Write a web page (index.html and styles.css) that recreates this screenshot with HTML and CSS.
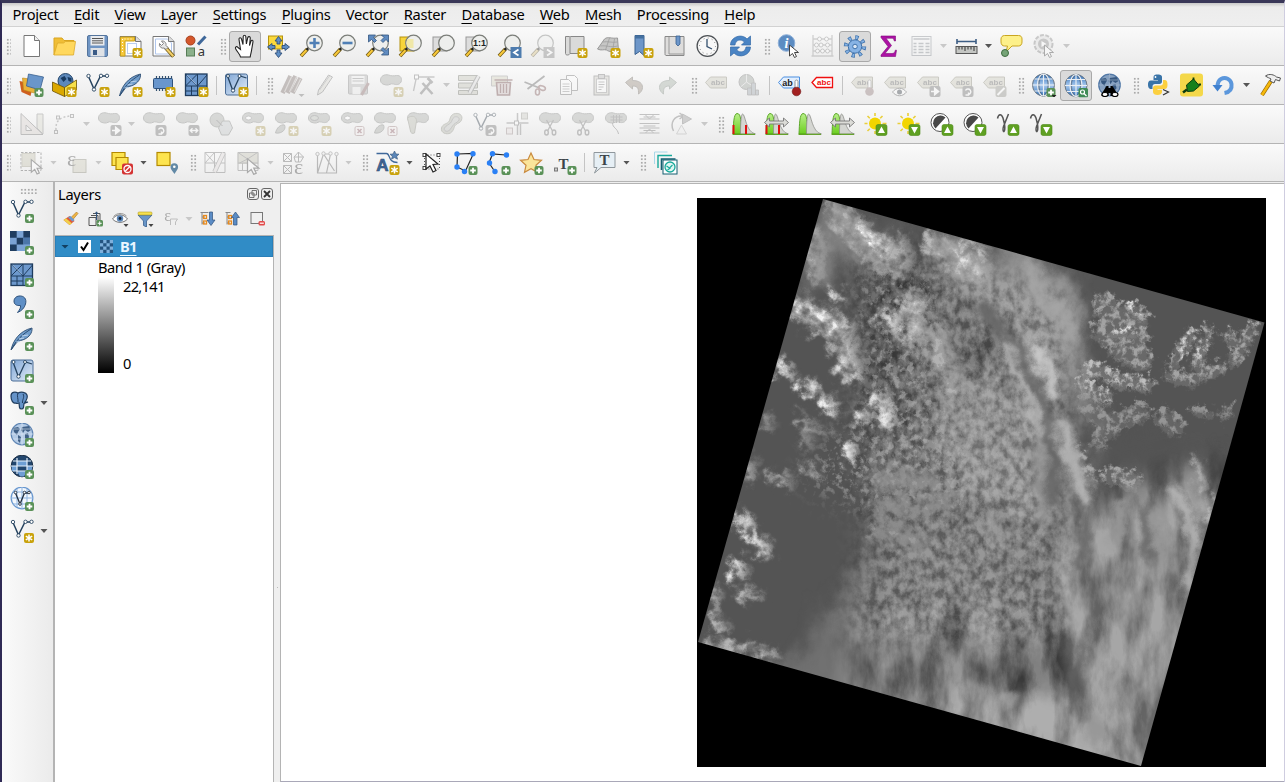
FILE: index.html
```html
<!DOCTYPE html>
<html lang="en">
<head>
<meta charset="utf-8">
<title>QGIS</title>
<link rel="stylesheet" href="styles.css">
</head>
<body>
<svg class="paints" aria-hidden="true"><defs>
<linearGradient id="gBlue" x1="0" y1="0" x2="1" y2="1"><stop offset="0" stop-color="#7fa6d6"/><stop offset="1" stop-color="#e4edf7"/></linearGradient>
<linearGradient id="gGlobe" x1="0" y1="0" x2="0" y2="1"><stop offset="0" stop-color="#2f6fb8"/><stop offset=".5" stop-color="#a8c9ee"/><stop offset="1" stop-color="#2f6fb8"/></linearGradient>
<linearGradient id="gGreen" x1="0" y1="0" x2="0" y2="1"><stop offset="0" stop-color="#b9f08a"/><stop offset="1" stop-color="#6cce1f"/></linearGradient>
</defs></svg>
<svg class="symbols" aria-hidden="true">
<defs>
<g id="bStar"><rect x="14" y="14" width="10" height="10" rx="2" fill="#c9a20c"/><path d="M19 15.500v7M15.800 17.200l6.400 3.600M15.800 20.800l6.400-3.600" stroke="#fff" stroke-width="1.500"/></g>
<g id="bPlus"><rect x="15" y="15" width="9" height="9" rx="2" fill="#5a9158"/><path d="M19.500 16.700v5.600M16.700 19.500h5.600" stroke="#fff" stroke-width="1.800"/></g>
<g id="bX"><rect x="14.500" y="14.500" width="9" height="9" rx="1.500" fill="#fbeeee" stroke="#b98080"/><path d="M17 17l4 4M21 17l-4 4" stroke="#b56" stroke-width="1.500"/></g>
<g id="bArrow"><rect x="13" y="13" width="11" height="11" rx="2" fill="#777"/><path d="M14.500 18.500h4M18.200 15.500l3.800 3-3.800 3z" stroke="#fff" stroke-width="1.600" fill="#fff"/></g>
<g id="bTurn"><rect x="13" y="13" width="11" height="11" rx="2" fill="#777"/><path d="M16 17.500a2.800 2.800 0 1 1 3 4M19 19.500v2.500h-3" stroke="#fff" stroke-width="1.400" fill="none"/></g>
<g id="bMove"><rect x="13" y="13" width="11" height="11" rx="2" fill="#777"/><path d="M15 18.500h7M17 16.300l-2.300 2.200 2.300 2.200M20 16.300l2.300 2.200-2.300 2.200" stroke="#fff" stroke-width="1.300" fill="none"/></g>
<g id="bUp"><rect x="12.500" y="12.500" width="11" height="11" rx="2" fill="#5fa022" stroke="#4d8a17" stroke-width=".6"/><path d="M18 14.500l3.500 6.500h-7z" fill="#fff"/></g>
<g id="bDown"><rect x="12.500" y="12.500" width="11" height="11" rx="2" fill="#5fa022" stroke="#4d8a17" stroke-width=".6"/><path d="M18 21.500l3.500-6.500h-7z" fill="#fff"/></g>
<g id="lens"><path d="M1.500 22L8 15" stroke="#6b5410" stroke-width="3.600"/><path d="M1.800 21.700L8 15" stroke="#f7c83a" stroke-width="2.200"/><path d="M7 16l3-3" stroke="#222" stroke-width="2.400"/><circle cx="15" cy="9" r="7.800" fill="#eeefed" stroke="#7b7e79" stroke-width="1.200"/></g>
<g id="cur"><path d="M12 11v11l3-2.500 2 4 2-1-2-4h4z" fill="#fff" stroke="#444" stroke-width="1"/></g>
<g id="vline"><path d="M3 3.500L8.500 16 15 3h6.500" fill="none" stroke="#26435f" stroke-width="1.500"/><g fill="#fff" stroke="#26435f" stroke-width=".9"><circle cx="3" cy="3" r="1.700"/><circle cx="8.500" cy="16.500" r="1.700"/><circle cx="15.500" cy="2.800" r="1.700"/><circle cx="21.500" cy="2.800" r="1.700"/></g></g>
<g id="feath"><path d="M1 23C3 14 9 4 22 1c.5 5-3 9-7 11-3 1.500-6 1.500-8 3z" fill="#6f9ccb" stroke="#2c4d72" stroke-width=".9"/><path d="M1.500 22.500C6 13 13 7 21 2" stroke="#2c4d72" fill="none"/><path d="M9 12l5-1M12 9l6-1M6 15l4-.5" stroke="#b8d0ea" stroke-width="1.200"/></g>
<g id="grid4"><rect x="1" y="1" width="21.500" height="21.500" fill="#6d98cc" stroke="#1f3c5e" stroke-width="1.300"/><path d="M1 13h21.500M13 1v21.500M1 1l12 12M13 1L1 13M13 13L22.500 2M1 18h12M7 13v9.500" stroke="#1f3c5e" stroke-width="1" fill="none"/><path d="M2.500 2l9.500 9.500" stroke="#a9c6e6" stroke-width=".8"/></g>
<g id="vbox"><rect x="1" y="1" width="22" height="21" rx="2" fill="url(#gBlue)" stroke="#4b6d96"/><path d="M3 3l5.500 15L15.500 3 22 5" fill="none" stroke="#26435f" stroke-width="1.300"/><g fill="#fff" stroke="#26435f" stroke-width=".9"><circle cx="3.500" cy="3" r="1.500"/><circle cx="8.500" cy="17.500" r="1.700"/><circle cx="15" cy="3" r="1.500"/></g></g>
<g id="bean"><path d="M1 6c0-4 4-6 8-5 3 1 5 1 8 .5 4-.5 6 3 4.500 6.500-1.500 3-5 3-7.500 2-3-1-4 1.500-7 1C3 10.500 1 9 1 6z" fill="#a9aea6" stroke="#7f837c"/></g>
<g id="tag"><path d="M1 9.500L6 4H22V15H6z" fill="#d0ccaa" stroke="#8f8c6a"/><text x="13.500" y="12.300" class="abc">abc</text></g>
<g id="sun"><circle cx="11.500" cy="11.500" r="6" fill="#f2d500"/><path d="M11.500 1v3M11.500 19v3M1 11.500h3M19 11.500h4M4 4l2.300 2.300M16.700 6.300L19 4M4 19l2.300-2.300" stroke="#e9cf3a" stroke-width="1.600"/></g>
<g id="half"><circle cx="10.500" cy="10.500" r="9" fill="#fff" stroke="#555"/><path d="M16 5.500A7.200 7.200 0 1 0 6 16.500z" fill="#484848"/></g>
<g id="hist"><path d="M1.500 22C2 12 2 2 5.500 1.500c5 0 3 9 5 20.500z" fill="url(#gGreen)" stroke="#5da82a"/><path d="M9 22c0-14 1-20 2-20 3 0 3 18 13 20z" fill="#d5d6d2" stroke="#8f918c" stroke-width=".8"/><path d="M1 22.300h22.500" stroke="#4e9a06"/></g>
<g id="cut"><use href="#bean"/><path d="M8 8l6 11M15 8L9 19" stroke="#777" stroke-width="1.300"/><g fill="none" stroke="#777" stroke-width="1.400"><ellipse cx="8" cy="20.500" rx="1.800" ry="2.500"/><ellipse cx="15.500" cy="20.500" rx="1.800" ry="2.500"/></g></g>
<g id="globeG"><circle cx="12" cy="12" r="11" fill="url(#gGlobe)" stroke="#6c7680"/><g fill="none" stroke="#4a5663" stroke-width="2" opacity=".55"><ellipse cx="12" cy="12" rx="5" ry="11"/></g><g fill="none" stroke="#e9eef4" stroke-width="1.200"><ellipse cx="12" cy="12" rx="6" ry="11"/><path d="M1 12h22M3 6h18M3 18h18M12 1v22"/></g></g>
<g id="globeL"><circle cx="12" cy="11" r="10.800" fill="#b4cbe6" stroke="#6086b4" stroke-width="1.200"/><path d="M3 5l5-1 2 2-2 3-1 3-3-3zM12 4l7-1 2 4-3 2-3-2-2 3-2-3zM8 12l3 2-1 6-2-2zM15 11l3-1 1 4-2 4-2-3z" fill="#34557c" opacity=".9"/><path d="M1 11h22M12 0v22M3 6h18M3 16h18" stroke="#dfeaf6" stroke-width=".6"/></g>
</defs>
<symbol id="new" viewBox="0 0 24 24"><path d="M4.500 1.500h10.500l5 5v16h-15.500z" fill="#fff" stroke="#777"/><path d="M15 1.500v5h5" fill="#eee" stroke="#777"/></symbol>
<symbol id="open" viewBox="0 0 24 24"><path d="M1.500 21V4h8l2 2.500h10V11" fill="#f0be36" stroke="#d9a520"/><path d="M1.500 21L5 9h6l2-1.500h10L21 21z" fill="#ffd85e" stroke="#dca92a" stroke-width=".8"/></symbol>
<symbol id="save" viewBox="0 0 24 24"><rect x="2" y="1.500" width="20" height="21" rx="1.500" fill="#6f95c4" stroke="#55759d"/><rect x="5" y="2" width="14" height="9.500" fill="#e9ebee"/><path d="M6.500 4.500h11M6.500 6.800h11M6.500 9h11" stroke="#555"/><rect x="5" y="14" width="14" height="8.500" fill="#dfe2e6"/><rect x="7.500" y="16" width="4" height="5" fill="#3b5b86"/></symbol>
<symbol id="newlay" viewBox="0 0 24 24"><path d="M1.500 2.500h16l5 5v14.500h-21z" fill="#fff" stroke="#777"/><path d="M17 2.500v5h5.500" fill="#ddd" stroke="#777"/><path d="M2 3h14v4H6.500v15H2z" fill="#f7c93c" stroke="#caa11a"/><path d="M4 5v15M6 5h9" stroke="#fff" stroke-dasharray="1 2"/><rect x="9" y="9.500" width="9" height="10" fill="none" stroke="#b9cdee"/><use href="#bStar"/></symbol>
<symbol id="laymgr" viewBox="0 0 24 24"><path d="M1.500 2.500h16l5 5v14.500h-21z" fill="#fff" stroke="#777"/><path d="M4 5h12l4 4v11H4z" fill="#fff" stroke="#b0c6ec"/><path d="M17 2.500v5h5.500" fill="#ddd" stroke="#777"/><path d="M14 13.500l8 9" stroke="#6b5410" stroke-width="3.800"/><path d="M14.500 14.300l7.300 8" stroke="#f3d06a" stroke-width="2.200"/><path d="M8 9.500a3.600 3.600 0 0 0 4.500 4.500l2 1.500 2-2-2-2c.5-3-2-5-4.500-4.500l2 2.500-2 2z" fill="#e8e8e8" stroke="#777" stroke-width=".9"/></symbol>
<symbol id="style" viewBox="0 0 24 24"><circle cx="6" cy="6.500" r="4.500" fill="#d4572c" stroke="#a6401c"/><path d="M13.500 10.500L21 2.500" stroke="#3f689a" stroke-width="3"/><rect x="2" y="14" width="8" height="8" fill="#8bb08b" stroke="#577c57"/><text x="16.800" y="22" class="ta">a</text></symbol>
<symbol id="pan" viewBox="0 0 24 24"><path d="M7.500 22.500c-.5-3-3.500-5-5-8.500-.5-1.800 1.200-2.500 2.500-1L7.500 15 6 5c-.2-2 2-2.300 2.500-.5L10 10l.2-8c.3-1.700 2.300-1.700 2.600 0l.6 7.500 1.400-6.500c.6-1.500 2.500-1 2.500.5l-.8 7.500 1.500-4.500c.7-1.300 2.200-.7 2 .7-.8 5-1.200 7-1.500 9-.3 2.200-1 4-1.300 6.300z" fill="#fff" stroke="#222" stroke-width="1.100"/></symbol>
<symbol id="pansel" viewBox="0 0 24 24"><rect x="2" y="2" width="14" height="13" fill="#fbd93c" stroke="#b4920e"/><path d="M12 2.500l3.500 4.500h-2v3h-3v-3h-2zM12 23.500l3.500-4.500h-2v-3h-3v3h-2zM1 13l4.500-3.500v2h3v3h-3v2zM23 13l-4.500-3.500v2h-3v3h3v2z" fill="#5f8fc6" stroke="#2f4f78" stroke-width=".9"/></symbol>
<symbol id="zin" viewBox="0 0 24 24"><use href="#lens"/><path d="M15 4v10M10 9h10" stroke="#4f7fb5" stroke-width="2.600"/></symbol>
<symbol id="zout" viewBox="0 0 24 24"><use href="#lens"/><path d="M10 9h10" stroke="#4f7fb5" stroke-width="2.600"/></symbol>
<symbol id="zfull" viewBox="0 0 24 24"><use href="#lens"/><path d="M3 1h7L8 3.500l3 3-2 2-3-3L3 8zM23 1v7l-2.500-2.500-3 3-2-2 3-3L16 1zM23 21h-7l2.500-2.500-3-3 2-2 3 3L23 14z" fill="#5f8bc0" stroke="#34557f" stroke-width=".8"/></symbol>
<symbol id="zsel" viewBox="0 0 24 24"><rect x="1.500" y="3" width="14" height="14" fill="#f8d53a" stroke="#b4920e"/><use href="#lens"/><path d="M9 5h6v9h-4.500a7 7 0 0 1-1.500-9z" fill="#f0e8a8"/></symbol>
<symbol id="zlay" viewBox="0 0 24 24"><rect x="1.500" y="3" width="14" height="14" fill="#ddd" stroke="#999"/><use href="#lens"/></symbol>
<symbol id="znat" viewBox="0 0 24 24"><rect x="1.500" y="3" width="14" height="14" fill="#ddd" stroke="#999"/><use href="#lens"/><text x="15" y="12.300" class="oo">1:1</text></symbol>
<symbol id="zlast" viewBox="0 0 24 24"><use href="#lens"/><rect x="13" y="13" width="11" height="11" fill="#4e7cae"/><path d="M21 15.500l-4.500 3 4.500 3" stroke="#fff" stroke-width="1.800" fill="none"/></symbol>
<symbol id="znext" viewBox="0 0 24 24"><use href="#lens"/><rect x="13" y="13" width="11" height="11" fill="#888"/><path d="M16.500 15.500l4.500 3-4.500 3" stroke="#fff" stroke-width="1.800" fill="none"/></symbol>
<symbol id="newmap" viewBox="0 0 24 24"><path d="M2 2.500h4l1 0h13.500v17H6.500c-1 2-4.500 2-4.500 0z" fill="#dadad9" stroke="#888"/><path d="M6.500 3v16" stroke="#888"/><use href="#bStar"/></symbol>
<symbol id="new3d" viewBox="0 0 24 24"><path d="M1 15L8 5c4-3 6 0 13-1l1 13c-6 1-9 1-12-1-3-1-5 1-9-1z" fill="#c6c6c5" stroke="#999"/><path d="M4 12c6-1 10 2 17 0M6 8c6-1 9 1 15 0M13 4l-4 12M18 5l-2 12" stroke="#999" stroke-width=".7" fill="none"/><use href="#bStar"/></symbol>
<symbol id="newbm" viewBox="0 0 24 24"><path d="M5.500 1.500h9v20l-4.500-4-4.500 3z" fill="#6d96c9" stroke="#38608f"/><path d="M5.500 1.500h9v3h-9z" fill="#44709f"/><use href="#bStar"/></symbol>
<symbol id="bm" viewBox="0 0 24 24"><path d="M2.500 2.500H21.500v19H3.500c-1-.5-1-1-1-2z" fill="#dedddc" stroke="#888"/><path d="M6.500 3v17h15" stroke="#999" fill="none"/><path d="M13.500 2h4v8l-2 2-2-2z" fill="#6d96c9" stroke="#38608f" stroke-width=".8"/></symbol>
<symbol id="clock" viewBox="0 0 24 24"><circle cx="12" cy="12" r="10.400" fill="#f8f8f8" stroke="#4d5155" stroke-width="1.300"/><circle cx="12" cy="12" r="8" fill="none" stroke="#666" stroke-width="1" stroke-dasharray=".8 3.390"/><path d="M11.500 5v7.500l5 2.500" stroke="#34506e" stroke-width="1.300" fill="none"/></symbol>
<symbol id="refresh" viewBox="0 0 24 24"><path d="M2 11C2 3 13-1 18.500 5L22 2v9h-9l3-3C12 4.500 7 6 6.500 11z" fill="#4a84c4" stroke="#3268a6" stroke-width=".7"/><path d="M22 13c0 8-11 12-16.500 6L2 22v-9h9l-3 3c4 3.500 9 2 9.500-3z" fill="#4a84c4" stroke="#3268a6" stroke-width=".7"/></symbol>
<symbol id="ident" viewBox="0 0 24 24"><circle cx="9" cy="9" r="8.300" fill="#5c8cc2" stroke="#8fb0d8"/><text x="9" y="14" class="inf">i</text><use href="#cur"/></symbol>
<symbol id="abacus" viewBox="0 0 24 24"><path d="M2.500 1v21M21.500 1v21M1 22h22M2 5h20M2 11h20M2 17h20" stroke="#999" stroke-width="1.300" fill="none"/><g fill="#fff" stroke="#888"><circle cx="9" cy="5" r="2"/><circle cx="16" cy="5" r="2"/><circle cx="6" cy="11" r="2"/><circle cx="10.500" cy="11" r="2"/><circle cx="17" cy="11" r="2"/><circle cx="7" cy="17" r="2"/><circle cx="12" cy="17" r="2"/><circle cx="17" cy="17" r="2"/></g></symbol>
<symbol id="gear" viewBox="0 0 24 24"><circle cx="12" cy="12" r="9" fill="none" stroke="#3f72ab" stroke-width="4.400" stroke-dasharray="3.200 3.869"/><circle cx="12" cy="12" r="9" fill="none" stroke="#87b3e4" stroke-width="3" stroke-dasharray="1.800 5.269" stroke-dashoffset="-.7"/><circle cx="12" cy="12" r="6.700" fill="#87b3e4" stroke="#3f72ab"/><circle cx="12" cy="12" r="2.300" fill="#dce8f5" stroke="#3f72ab"/></symbol>
<symbol id="sigma" viewBox="0 0 24 24"><path d="M4.500 2H19v5h-1.200c-.5-2.300-1-2.800-3-2.800H9.500L15 11.500 8.500 19.500h7c2 0 2.800-1 3.300-3.300h1.200L19 22.500H4.500V21l7-8.500-7-9z" fill="#ad12a5" stroke="#7d0b78" stroke-width=".6"/></symbol>
<symbol id="table" viewBox="0 0 24 24"><rect x="2.500" y="2.500" width="19" height="19" fill="#f4f6f8" stroke="#7f8c99"/><path d="M4 5h16M4 9.500h3M9 9.500h5M16 9.500h4M4 12.500h3M9 12.500h5M16 12.500h4M4 15.500h3M9 15.500h5M16 15.500h4M4 18.500h3M9 18.500h5M16 18.500h4" stroke="#7f8c99" stroke-width="1.400"/></symbol>
<symbol id="ruler" viewBox="0 0 24 24"><path d="M2 7.500h20M2.500 5v5M21.500 5v5" stroke="#3c5d84" stroke-width="1.600"/><rect x="1.500" y="12.500" width="21" height="7" fill="#c4c6c3" stroke="#555"/><path d="M4.500 13v2.500M7.500 13v2.500M10.500 13v4M13.500 13v2.500M16.500 13v2.500M19.500 13v4" stroke="#333"/></symbol>
<symbol id="tip" viewBox="0 0 24 24"><path d="M5 1.500h14c2.500 0 3.500 1.500 3.500 3.500v3c0 2.500-1.500 4-3.500 4h-6.500L6.500 18 8 12H5c-2 0-3.500-1.500-3.500-4V5c0-2 1.500-3.500 3.500-3.500z" fill="#fdf08a" stroke="#c9a520"/><circle cx="5.500" cy="19" r="3.500" fill="#76a478" stroke="#3f6d41"/></symbol>
<symbol id="action" viewBox="0 0 24 24"><circle cx="11" cy="10" r="9" fill="#ddd" stroke="#888" stroke-width="2" stroke-dasharray="4 1.500"/><circle cx="11" cy="10" r="5.500" fill="#888"/><path d="M9 7l5 3-5 3z" fill="#fff"/><use href="#cur"/></symbol>
<symbol id="dsm" viewBox="0 0 24 24"><path d="M0 8l14 3-3 12-9-4z" fill="#cf5f1e"/><path d="M3 5l14 2-2 13-11-3z" fill="#e9b23a" stroke="#b88418" stroke-width=".6"/><path d="M9 1l15 3-3.500 13L7 13z" fill="#6a96ca" stroke="#38608f" stroke-width=".8"/><use href="#bPlus"/></symbol>
<symbol id="gpkg" viewBox="0 0 24 24"><circle cx="13" cy="8" r="7.500" fill="#5c88bb" stroke="#24456b"/><path d="M8 5l4-2 2 3-3 3zM15 4l4 1 0 4-3-1z" fill="#183a60"/><path d="M0 9l12 5.500v9L0 18z" fill="#dba800" stroke="#6b5205" stroke-width=".8"/><path d="M12 14.500L24 7v10l-12 6.500z" fill="#f7e04a" stroke="#6b5205" stroke-width=".8"/><use href="#bStar"/></symbol>
<symbol id="vnew" viewBox="0 0 24 24"><use href="#vline"/><use href="#bStar"/></symbol>
<symbol id="vadd" viewBox="0 0 24 24"><use href="#vline"/><use href="#bPlus"/></symbol>
<symbol id="fnew" viewBox="0 0 24 24"><use href="#feath"/><use href="#bStar"/></symbol>
<symbol id="fadd" viewBox="0 0 24 24"><use href="#feath"/><use href="#bPlus"/></symbol>
<symbol id="chip" viewBox="0 0 24 24"><path d="M5 3v15M8 3v15M11 3v15M14 3v15M17 3v15M20 3v15" stroke="#33516f" stroke-width="1.200"/><rect x="2" y="5.500" width="19" height="10" rx="1" fill="#6996cc" stroke="#2f527c"/><use href="#bStar"/></symbol>
<symbol id="mnew" viewBox="0 0 24 24"><use href="#grid4"/><use href="#bStar"/></symbol>
<symbol id="madd" viewBox="0 0 24 24"><use href="#grid4"/><use href="#bPlus"/></symbol>
<symbol id="vbnew" viewBox="0 0 24 24"><use href="#vbox"/><use href="#bStar"/></symbol>
<symbol id="vbadd" viewBox="0 0 24 24"><use href="#vbox"/><use href="#bPlus"/></symbol>
<symbol id="pens" viewBox="0 0 24 24"><path d="M2 20L10 3M7 20l8-17M12 20l8-15" stroke="#8a6e66" stroke-width="4.500"/><path d="M4 19L11 4M9 19l7-15M14 19l6-13" stroke="#c9b8b0" stroke-width="1.200"/><path d="M18 21h6l-3 3z" fill="#777"/></symbol>
<symbol id="pen" viewBox="0 0 24 24"><path d="M4 22l1-5L15 2l4 2L9 19z" fill="#d8d6c8" stroke="#777"/><path d="M6 17L16 3" stroke="#999"/></symbol>
<symbol id="savee" viewBox="0 0 24 24"><rect x="2" y="2" width="19" height="19" rx="1" fill="#b4b4b4" stroke="#888"/><rect x="5" y="3" width="13" height="8" fill="#eee"/><path d="M6 5.500h11M6 8h11" stroke="#888"/><rect x="6" y="14" width="8" height="7" fill="#eee"/><path d="M15 22l7-12" stroke="#a66" stroke-width="3"/></symbol>
<symbol id="addpoly" viewBox="0 0 24 24"><g transform="translate(0 1)"><use href="#bean"/></g><use href="#bStar"/></symbol>
<symbol id="vtool" viewBox="0 0 24 24"><path d="M4 4h18M4 4L1 18" stroke="#888" stroke-width="1.300" fill="none"/><path d="M8 21L19 8M15 5l5 5M10 10l10 11" stroke="#777" stroke-width="2.600" fill="none"/><rect x="2" y="2" width="4" height="4" fill="#fff" stroke="#777"/></symbol>
<symbol id="multi" viewBox="0 0 24 24"><path d="M1 2.500h19v5H1zM1 10h19v5H1zM1 17.500h19v4H1z" fill="#c5c9ae" stroke="#777b66"/><path d="M12 20L21 3" stroke="#777" stroke-width="4.500"/><path d="M12 20L21 3" stroke="#ddd" stroke-width="2.500"/></symbol>
<symbol id="trash" viewBox="0 0 24 24"><path d="M1 3h16v10H1z" fill="#d8d4a8" stroke="#999"/><path d="M4 7h18M6 9.500h14l-1 12.500H7z" fill="#e0c0c0" stroke="#9b4545" stroke-width="1.600"/><path d="M10 11v9M13 11v9M16 11v9" stroke="#9b4545" stroke-width="1.300"/></symbol>
<symbol id="sciss" viewBox="0 0 24 24"><path d="M1 9l15 6M4 16L21 3" stroke="#666" stroke-width="1.800"/><ellipse cx="18.500" cy="15" rx="3.500" ry="2" fill="none" stroke="#a55" stroke-width="1.600" transform="rotate(20 18.500 15)"/><ellipse cx="14" cy="19" rx="2" ry="3" fill="none" stroke="#a55" stroke-width="1.600"/></symbol>
<symbol id="copy" viewBox="0 0 24 24"><path d="M10 2.500h8l3 3v12H10z" fill="#fff" stroke="#777"/><path d="M4 6.500h8l3 3v12H4z" fill="#fff" stroke="#777"/><path d="M6 11h7M6 13.500h7M6 16h7M6 18.500h7" stroke="#999"/></symbol>
<symbol id="paste" viewBox="0 0 24 24"><rect x="4.500" y="3" width="15" height="19" fill="#d3cfbf" stroke="#777"/><rect x="7" y="6" width="10" height="13.500" fill="#fff" stroke="#999"/><path d="M9 9h6M9 11.500h6M9 14h5M9 16.500h3" stroke="#888"/><rect x="9" y="1.500" width="6" height="4" fill="#bbb" stroke="#777"/></symbol>
<symbol id="undo" viewBox="0 0 24 24"><path d="M3 9.500L10 4v3.500c7 0 10 3 10 7 0 3-2 5-4 6.500 0-5 0-8-6-8V16z" fill="#a98f72" stroke="#7f705f"/></symbol>
<symbol id="redo" viewBox="0 0 24 24"><path d="M21 9.500L14 4v3.500c-7 0-10 3-10 7 0 3 2 5 4 6.500 0-5 0-8 6-8V16z" fill="#9cb59c" stroke="#7b8f7f"/></symbol>
<symbol id="lab" viewBox="0 0 24 24"><use href="#tag"/></symbol>
<symbol id="diag" viewBox="0 0 24 24"><circle cx="9" cy="9" r="7.500" fill="#9aa79a" stroke="#777"/><path d="M9 9V1.500M9 9l-6 5M9 9l6 4" stroke="#ddd"/><path d="M10 15h4v7h-4zM14 10h4v12h-4zM18 17h3v5h-3z" fill="#9ab" stroke="#777" stroke-width=".8"/></symbol>
<symbol id="pinlab" viewBox="0 0 24 24"><path d="M1 9.500L6 4H22V15H6z" fill="#e2efff" stroke="#4a8fe0"/><text x="10" y="12.500" class="abc dk">ab</text><path d="M17.500 8.500c0-2 3-2 3 0v7h-3z" fill="#fff" stroke="#777" stroke-width=".8"/><circle cx="19" cy="18.500" r="4.300" fill="#a32020" stroke="#701515" stroke-width=".6"/></symbol>
<symbol id="redlab" viewBox="0 0 24 24"><path d="M1.500 9.500L6 4.500H22V14.500H6z" fill="#fff" stroke="#f01010" stroke-width="1.300"/><text x="13.500" y="12.300" class="abc red">abc</text></symbol>
<symbol id="lpin" viewBox="0 0 24 24"><use href="#tag"/><path d="M17.500 8.500c0-2 3-2 3 0v7h-3z" fill="#fff" stroke="#777" stroke-width=".8"/><circle cx="19" cy="18.500" r="4.300" fill="#a77"/></symbol>
<symbol id="leye" viewBox="0 0 24 24"><use href="#tag"/><path d="M9 19c4-5 10-5 14 0-4 5-10 5-14 0z" fill="#fff" stroke="#555"/><circle cx="16" cy="19" r="2.500" fill="#345"/></symbol>
<symbol id="lmove" viewBox="0 0 24 24"><use href="#tag"/><use href="#bArrow"/></symbol>
<symbol id="lrot" viewBox="0 0 24 24"><use href="#tag"/><use href="#bTurn"/></symbol>
<symbol id="ledit" viewBox="0 0 24 24"><use href="#tag"/><rect x="13" y="13" width="11" height="11" rx="2" fill="#998"/><path d="M15 22l7-7" stroke="#fff" stroke-width="2"/></symbol>
<symbol id="gl1" viewBox="0 0 24 24"><use href="#globeG"/><use href="#bPlus"/><path d="M20 22h5l-2.500 2.500z" fill="#222"/></symbol>
<symbol id="gl2" viewBox="0 0 24 24"><use href="#globeG"/><rect x="14.500" y="14.500" width="9.500" height="9.500" rx="1.500" fill="#3f8a55"/><circle cx="18.500" cy="18.500" r="2" fill="none" stroke="#fff" stroke-width="1.200"/><path d="M20 20l2.500 2.500" stroke="#fff" stroke-width="1.300"/></symbol>
<symbol id="gl3" viewBox="0 0 24 24"><g transform="translate(0 1)"><use href="#globeL"/></g><circle cx="12" cy="12" r="11" fill="#1d426c" opacity=".3"/><path d="M4 21l5-8h2v2h2v-2h2l5 8v2h-7v-3h-2v3H4z" fill="#000"/><ellipse cx="7.500" cy="21.500" rx="3" ry="2" fill="#fff" stroke="#000" stroke-width="1.200"/><ellipse cx="17.500" cy="21.500" rx="3" ry="2" fill="#fff" stroke="#000" stroke-width="1.200"/></symbol>
<symbol id="py" viewBox="0 0 24 24"><path d="M7 7V4c0-2 2-2.500 4-2.500s4.500.5 4.500 2.500v4.500c0 1.500-1 2.500-2.500 2.500H8.500C7 11 6 12 6 13.500V16H4.500C2 16 1.500 13.500 1.500 11.500S2 7.500 4.500 7.500H11.500V7z" fill="#3a74a8"/><path d="M16.500 7H18c2.500 0 3 2 3 4.500s-.5 4.500-3 4.500H11v.8h4.500V19c0 2-2 3-4.500 3s-4.500-1-4.500-3v-4c0-1.500 1-2.500 2.500-2.500h5c1.500 0 2.500-1 2.500-2.500z" fill="#fcd040"/><circle cx="9" cy="4" r=".9" fill="#fff"/><path d="M16.500 16.500l5.500 2.500-5.500 3" stroke="#333" stroke-width="1.200" fill="none"/></symbol>
<symbol id="plug" viewBox="0 0 24 24"><rect x=".5" y=".5" width="23" height="23" rx="3" fill="#f4d84a"/><path d="M3.500 19.500l4-3" stroke="#0c3d0e" stroke-width="2.600"/><path d="M7 12l7-6 6 7-6 5-6 .5z" fill="#15801b" stroke="#0c3d0e" stroke-width="1"/><path d="M14 7V4.500M19 11.500h2.500" stroke="#0c3d0e" stroke-width="1.800"/></symbol>
<symbol id="rel" viewBox="0 0 24 24"><path d="M12 20c6-1 7.500-5 7-9-.8-5-6-7.500-10.500-5-3 1.700-3.500 4-3.500 8" stroke="#5b97dc" stroke-width="4" fill="none"/><path d="M0 12h10l-5 6.500z" fill="#3f80cf"/></symbol>
<symbol id="hammer" viewBox="0 0 24 24"><path d="M4.500 22L13.500 8" stroke="#9a6a00" stroke-width="4"/><path d="M4.500 22L13.500 8" stroke="#f6b90c" stroke-width="2.600"/><path d="M8 3c4-3 9-1 11 1l4 1-1 3-4-1.500-1.500 3.500-4-2 1-2c-1.500-1-3.500-1.500-5.500-3z" fill="#eee" stroke="#555"/></symbol>
<symbol id="tri" viewBox="0 0 24 24"><path d="M1.500 1.500v21h22zM6.500 13v5.500h6z" fill="#e2d3cc" stroke="#777" fill-rule="evenodd"/><path d="M17.500 2h6v20l-6-6z" fill="#dcdcc4" stroke="#888"/></symbol>
<symbol id="arc" viewBox="0 0 24 24"><path d="M3.500 18C3 10 6 5 18 4" stroke="#888" stroke-width="1.500" stroke-dasharray="2 2" fill="none"/><g fill="#eee" stroke="#777"><rect x="2" y="18.500" width="3" height="3"/><rect x="4" y="4" width="3" height="3"/><rect x="18" y="2.500" width="3" height="3"/></g></symbol>
<symbol id="d1" viewBox="0 0 24 24"><use href="#bean"/><use href="#bArrow"/></symbol>
<symbol id="d2" viewBox="0 0 24 24"><use href="#bean"/><use href="#bTurn"/></symbol>
<symbol id="d3" viewBox="0 0 24 24"><use href="#bean"/><use href="#bMove"/></symbol>
<symbol id="d4" viewBox="0 0 24 24"><circle cx="8.500" cy="8" r="7" fill="#a9aea6" stroke="#7f837c"/><path d="M10 16l4-7h7l3 7-4 7h-7z" fill="#c2cbd0" stroke="#7f837c"/><path d="M8 8l6 6" stroke="#666"/></symbol>
<symbol id="d5" viewBox="0 0 24 24"><use href="#bean"/><ellipse cx="7" cy="6" rx="3" ry="2" fill="#fff" stroke="#888"/><use href="#bStar"/></symbol>
<symbol id="d6" viewBox="0 0 24 24"><use href="#bean"/><path d="M1 21c1-5 5-9 9-8 2 4-2 9-9 8z" fill="#a9aea6" stroke="#7f837c"/><use href="#bStar"/></symbol>
<symbol id="d7" viewBox="0 0 24 24"><use href="#bean"/><ellipse cx="7" cy="6" rx="4" ry="2.500" fill="#b7bdae" stroke="#777"/><use href="#bStar"/></symbol>
<symbol id="d8" viewBox="0 0 24 24"><use href="#bean"/><ellipse cx="7" cy="6" rx="3" ry="2" fill="#fff" stroke="#888"/><use href="#bX"/></symbol>
<symbol id="d9" viewBox="0 0 24 24"><use href="#bean"/><path d="M1 21c1-5 5-9 9-8 2 4-2 9-9 8z" fill="#a9aea6" stroke="#7f837c"/><use href="#bX"/></symbol>
<symbol id="d10" viewBox="0 0 24 24"><use href="#bean"/><path d="M1 6c4-3 9-2 9 3l-2 12c-2 1-4 0-4-2z" fill="#b9bba2" stroke="#8b8d75"/></symbol>
<symbol id="d11" viewBox="0 0 24 24"><path d="M14 2c5-2 10 1 8 6-1 3-4 3-6 5s-1 5-5 8c-4 2-10 0-9-5 1-4 5-4 7-6s1-6 5-8z" fill="#b5b9a2" stroke="#8b8d75"/><path d="M15 5c3-1 6 1 4 4-2 2-4 2-6 5s-2 3-4 5c-3 1-5-1-4-3 2-3 4-3 6-5s1-4 4-6z" fill="#c0c4bd" stroke="#888"/></symbol>
<symbol id="d12" viewBox="0 0 24 24"><use href="#vline"/><use href="#bTurn"/></symbol>
<symbol id="d13" viewBox="0 0 24 24"><path d="M1 11h22M12 1v22M15 12v11" stroke="#888" stroke-width="1.500"/><rect x="16" y="1" width="6" height="6" fill="#ccb" stroke="#998"/><rect x="1" y="16" width="6" height="6" fill="#edd" stroke="#a88"/><rect x="9" y="9" width="4" height="4" fill="#fff" stroke="#777"/></symbol>
<symbol id="d14" viewBox="0 0 24 24"><use href="#cut"/></symbol>
<symbol id="d16" viewBox="0 0 24 24"><use href="#bean"/><path d="M6 5h12M6 8h12M8 11c0 5 5 5 6 11M9 3v8M12 3v8M15 3v8" stroke="#777" fill="none"/></symbol>
<symbol id="d17" viewBox="0 0 24 24"><path d="M2 2.500h20M2 7h20M2 11.500h20M2 16h20M2 21h20M6 5h12M6 14h12M6 18.500h12M8 3l4 4 4-4M8 21l4-4 4 4" stroke="#777" stroke-width="1" fill="none"/></symbol>
<symbol id="d18" viewBox="0 0 24 24"><path d="M3 19C-1 11 4 3 12 4M9 1l4 3-4 3" stroke="#777" stroke-width="1.500" fill="none"/><path d="M12 2l9 5-9 5z" fill="#999" stroke="#777"/><path d="M11 13l5 9H6z" fill="#eee" stroke="#aaa"/></symbol>
<symbol id="h1" viewBox="0 0 24 24"><use href="#hist"/><path d="M2 13v9M14.500 13v9" stroke="#e01010" stroke-width="2"/></symbol>
<symbol id="h2" viewBox="0 0 24 24"><use href="#hist"/><path d="M2 13v9M14.500 13v9" stroke="#e01010" stroke-width="2"/><path d="M0 10.500l5-4.500v3h14v-3l5 4.500-5 4.500v-3H5v3z" fill="#dcdcd8" stroke="#777" stroke-width=".9"/></symbol>
<symbol id="h3" viewBox="0 0 24 24"><use href="#hist"/></symbol>
<symbol id="h4" viewBox="0 0 24 24"><use href="#hist"/><path d="M0 10.500l5-4.500v3h14v-3l5 4.500-5 4.500v-3H5v3z" fill="#dcdcd8" stroke="#777" stroke-width=".9"/></symbol>
<symbol id="s1" viewBox="0 0 24 24"><use href="#sun"/><use href="#bUp"/></symbol>
<symbol id="s2" viewBox="0 0 24 24"><use href="#sun"/><use href="#bDown"/></symbol>
<symbol id="c1" viewBox="0 0 24 24"><use href="#half"/><use href="#bUp"/></symbol>
<symbol id="c2" viewBox="0 0 24 24"><use href="#half"/><use href="#bDown"/></symbol>
<symbol id="g1" viewBox="0 0 24 24"><path d="M2 6.500C3 1.500 6 1.500 7.500 6L9 12 13 2M9 12c-1.500 3-1.800 6-1 7.500 1.500 0 1.500-4 1-7.500z" fill="none" stroke="#555" stroke-width="1.500"/><use href="#bUp"/></symbol>
<symbol id="g2" viewBox="0 0 24 24"><path d="M2 6.500C3 1.500 6 1.500 7.500 6L9 12 13 2M9 12c-1.500 3-1.800 6-1 7.500 1.500 0 1.500-4 1-7.500z" fill="none" stroke="#555" stroke-width="1.500"/><use href="#bDown"/></symbol>
<symbol id="sel" viewBox="0 0 24 24"><rect x="1.500" y="1.500" width="20" height="18" fill="none" stroke="#555" stroke-dasharray="2.500 1.500"/><rect x="2.500" y="2.500" width="13" height="13" fill="#c9c59c" stroke="#a7a37b"/><g transform="translate(-2 -4) scale(1.150)"><use href="#cur"/></g></symbol>
<symbol id="seps" viewBox="0 0 24 24"><rect x="8.500" y="8.500" width="13" height="13" fill="#d2cea9" stroke="#918e6b"/><text x="7" y="15" class="eps">ε</text></symbol>
<symbol id="desel" viewBox="0 0 24 24"><path d="M2.500 1.500h13v13h-13z" fill="#fde44f" stroke="#b48a00" stroke-width="1.200"/><path d="M6.500 6.500h12v12h-12z" fill="#fde44f" stroke="#b48a00" stroke-width="1.200"/><rect x="12.500" y="12.500" width="11" height="11" rx="2" fill="#d43333"/><circle cx="18" cy="18" r="3.500" fill="none" stroke="#fff" stroke-width="1.300"/><path d="M15.500 20.500l5-5" stroke="#fff" stroke-width="1.300"/></symbol>
<symbol id="selloc" viewBox="0 0 24 24"><rect x="2.500" y="1.500" width="13" height="13" fill="#fde44f" stroke="#b48a00" stroke-width="1.200"/><path d="M20 23c-2-3-4-4.500-4-7a3.800 3.800 0 0 1 7.600 0c0 2.500-2 4-3.600 7z" fill="#6289a6"/><circle cx="19.800" cy="15.800" r="1.300" fill="#fff"/></symbol>
<symbol id="m1" viewBox="0 0 24 24"><path d="M1.500 1.500h20v20h-20zM1.500 12h20M11 1.500v20M1.500 1.500L11 12M11 1.500L1.500 12" stroke="#777" fill="none"/><path d="M11 21L20 2" stroke="#777" stroke-width="4.500"/><path d="M11 21L20 2" stroke="#e6dada" stroke-width="3"/></symbol>
<symbol id="m2" viewBox="0 0 24 24"><path d="M1 1h21v12H1z" fill="#c4c19f"/><path d="M1.500 1.500h20v18h-20zM1.500 12h20M1.500 1.500L11 8l10-6.500M6 12v8M11 8L3 12" stroke="#777" fill="none"/><g transform="translate(-4 -6) scale(1.250)"><use href="#cur"/></g></symbol>
<symbol id="m3" viewBox="0 0 24 24"><path d="M2 2.500h8v8H2zM2 2.500l8 8M10 2.500l-8 8M2 14.500h8v8H2zM2 14.500l8 8M10 14.500l-8 8M12.500 6L17 1l5 5-3 5h-5zM12.500 6h9.500M17 1v10" stroke="#666" fill="none"/><text x="17" y="23" class="eps">ε</text></symbol>
<symbol id="m4" viewBox="0 0 24 24"><path d="M3 3v19h19V3M3 22L9 3l11 17M9 3L16 3 12 22" stroke="#666" stroke-width="1.200" fill="none"/><g fill="#eee" stroke="#777"><circle cx="3" cy="3" r="1.700"/><circle cx="9" cy="2.500" r="1.700"/><circle cx="16" cy="2.500" r="1.700"/><circle cx="22" cy="3" r="1.700"/></g></symbol>
<symbol id="anno" viewBox="0 0 24 24"><path d="M1 2.500h10c4 0 1 9 11 9" stroke="#3f689a" stroke-width="1.300" fill="none"/><path d="M19 0l1.500 3 3 .2-2.300 2 .8 3-3-1.600-3 1.600.8-3-2.300-2 3-.2z" fill="#5b86b8" stroke="#34557c" stroke-width=".6"/><text x="7" y="20" class="bigA">A</text><use href="#bStar"/></symbol>
<symbol id="asel" viewBox="0 0 24 24"><rect x="4" y="4" width="15" height="14" fill="none" stroke="#555" stroke-dasharray="1 2"/><g fill="#fff" stroke="#444"><rect x="2.500" y="2.500" width="3" height="3"/><rect x="16.500" y="2.500" width="3" height="3"/><rect x="2.500" y="15.500" width="3" height="3"/></g><path d="M5.500 3v15l4-3 3 6 3-1.500-3-6 5-.5z" fill="#fff" stroke="#222" stroke-width="1.200"/></symbol>
<symbol id="apoly" viewBox="0 0 24 24"><path d="M4 3l16-.5-8 17.500-8.500-4z" fill="none" stroke="#222" stroke-width="1.200"/><g fill="#2a80f5"><circle cx="3.500" cy="3" r="2.700"/><circle cx="19.500" cy="2.800" r="2.700"/><circle cx="3.500" cy="16" r="2.700"/><circle cx="11" cy="20.500" r="2.700"/></g><use href="#bPlus"/></symbol>
<symbol id="aline" viewBox="0 0 24 24"><path d="M19 4L6 3 2.500 12l5.500 8" fill="none" stroke="#222" stroke-width="1.200"/><g fill="#2a80f5"><circle cx="20" cy="4" r="2.700"/><circle cx="6" cy="2.800" r="2.700"/><circle cx="3" cy="12" r="2.700"/><circle cx="8.500" cy="20.500" r="2.700"/></g><use href="#bPlus"/></symbol>
<symbol id="astar" viewBox="0 0 24 24"><path d="M11.500 2l3 6.500 7.500.8-5.500 5 1.500 7-6.500-3.500L5 21.300l1.500-7-5.500-5 7.500-.8z" fill="#fbe59a" stroke="#c98a3e" stroke-width="1.200"/><use href="#bPlus"/></symbol>
<symbol id="atext" viewBox="0 0 24 24"><text x="11" y="18" class="tT">T</text><rect x="2" y="17" width="3" height="3" fill="#ccc" stroke="#777"/><use href="#bPlus"/></symbol>
<symbol id="aball" viewBox="0 0 24 24"><path d="M1.500 1.500h21v15H8.500L2 22l2.500-5.500h-3z" fill="#e6eff5" stroke="#8f979c"/><text x="12" y="14" class="tT">T</text></symbol>
<symbol id="wms" viewBox="0 0 24 24"><path d="M1 13V1h13" stroke="#a8d8e8" fill="none"/><path d="M4.500 17V4.500h14" stroke="#17a99b" stroke-width="1.400" fill="none"/><path d="M8 19V8h14" stroke="#135f70" stroke-width="1.600" fill="none"/><rect x="9.500" y="9" width="14" height="14" fill="#fff" stroke="#135f70"/><circle cx="16.500" cy="16" r="5" fill="#dff5f2" stroke="#17a99b" stroke-width="1.300"/><path d="M13 15l3 2 3-3M14 19l3-2" stroke="#17a99b" stroke-width="1.100" fill="none"/></symbol>
<symbol id="radd" viewBox="0 0 24 24"><rect x="0" y="0" width="20" height="20" fill="#7ba3d4"/><path d="M0 0h6.700v6.700H0zM13.400 0H20v6.700h-6.600zM6.700 6.700h6.700v6.700H6.700zM0 13.400h6.700V20H0z" fill="#1f3d60"/><path d="M13.400 6.700H20v6.700h-6.600z" fill="#4b76aa"/><use href="#bPlus"/></symbol>
<symbol id="comma" viewBox="0 0 24 24"><path d="M9 1c5-.5 8 3 6.500 8-1 4-4 7-8 8.500 2-2.500 3.500-5 3-7C6 11 4 9 4 6c0-2.500 2-4.700 5-5z" fill="#5f8fc6" stroke="#2f527c"/><use href="#bPlus"/></symbol>
<symbol id="pg" viewBox="0 0 24 24"><path d="M1 5c0-4 4-4.500 7-3 3-1.500 8-1 9 2 .7 2-.5 5-2 7h3l-4 1.500-.5 4c-.5 2-3.500 2-4 0L9 12c-2 1-3 0-3.500 0C3 13 1 9 1 5z" fill="#6593c8" stroke="#1f3c5e" stroke-width="1.200"/><path d="M8 2c-1.500 3 .5 6 0 9M13 3c2 3-1 6-.5 9" stroke="#1f3c5e" fill="none"/><use href="#bPlus"/></symbol>
<symbol id="wmsadd" viewBox="0 0 24 24"><use href="#globeL"/><use href="#bPlus"/></symbol>
<symbol id="wcs" viewBox="0 0 24 24"><circle cx="12" cy="11" r="10.800" fill="#22466e" stroke="#1c2f45"/><path d="M7 6h10v5H7zM1.500 11H7v5H2zM17 11h5.500l-1 5H17zM7 16h10l-3 5.500h-4z" fill="#6f9fd4"/><path d="M1 11h22M3 6h18M3 16h18M7 3v16M17 3v16" stroke="#e5effa" stroke-width="1.200"/><use href="#bPlus"/></symbol>
<symbol id="wfs" viewBox="0 0 24 24"><circle cx="12" cy="11" r="10.800" fill="#f4f8fd" stroke="#6a98cf" stroke-width="1.300"/><path d="M1 11h22M3 5h18M3 17h18M12 0v22M7 2v18M17 2v18" stroke="#8db3e0" fill="none"/><path d="M5.500 6L10 17l4.500-11h5" stroke="#222f40" stroke-width="1.300" fill="none"/><g fill="#fff" stroke="#222f40" stroke-width=".9"><circle cx="5.500" cy="5.500" r="1.300"/><circle cx="10" cy="17" r="1.300"/><circle cx="14.500" cy="5.500" r="1.300"/><circle cx="19" cy="5.500" r="1.300"/></g><use href="#bPlus"/></symbol>
<symbol id="l1" viewBox="0 0 16 16"><path d="M8 7l6-6 1.500 1.500-5.500 6.500z" fill="#f0b545" stroke="#a8741b" stroke-width=".6"/><path d="M1 9l6-4 5 5-5 4z" fill="#e05b3b"/><path d="M1 9l2.500-1.700 6 5.200-2.500 1.500z" fill="#f0d04a"/><path d="M5.500 6.500L8 5l4 4-2 1.500z" fill="#6d98cc"/></symbol>
<symbol id="l2" viewBox="0 0 16 16"><path d="M1.500 6.500h7v8h-7zM3.500 4.500h7v8M5.500 2.500h7v8" fill="none" stroke="#555"/><path d="M9 9V1M7.500 3L9 .8 10.500 3" stroke="#34557c" fill="none"/><rect x="9" y="9" width="6.500" height="6.500" rx="1.500" fill="#5a9158"/><path d="M12.200 10.300v4M10.200 12.300h4" stroke="#fff"/></symbol>
<symbol id="l3" viewBox="0 0 16 16"><path d="M0 8c4-5.500 11-5.500 15 0-4 4.500-11 4.500-15 0z" fill="#fff" stroke="#777"/><circle cx="7.500" cy="7.500" r="3.200" fill="#5b86b8"/><circle cx="7.500" cy="7.500" r="1.400" fill="#123"/><path d="M1 5.500C5 1.500 10 1.500 14 5" stroke="#999" fill="none"/><path d="M11 13h5l-2.500 3z" fill="#444"/></symbol>
<symbol id="l4" viewBox="0 0 16 16"><path d="M.5 4h14L9 10v6l-3-1.500V10z" fill="#6996c8" stroke="#38608f" stroke-width=".8"/><rect x=".5" y="1" width="14" height="3" rx="1" fill="#f5e050" stroke="#b4a020" stroke-width=".6"/><path d="M11 13h5l-2.500 3z" fill="#444"/></symbol>
<symbol id="l5" viewBox="0 0 16 16"><text x="5" y="10" class="eps sm">ε</text><path d="M8 8h7l-2 3v3M8 8v6" stroke="#777" fill="none"/></symbol>
<symbol id="l6" viewBox="0 0 16 16"><path d="M1 1.500h8M2.500 1.500v12M2.500 6h3M2.500 12h3" stroke="#888" fill="none"/><rect x="4" y="4.500" width="3" height="3" fill="none" stroke="#e88a1c" stroke-width="1.300"/><rect x="4" y="10" width="3" height="3" fill="none" stroke="#e88a1c" stroke-width="1.300"/><path d="M10 1h3v8h2.500L11.500 14.500 7.500 9H10z" fill="#5b8cc5" stroke="#2f527c" stroke-width=".7"/></symbol>
<symbol id="l7" viewBox="0 0 16 16"><path d="M1 1.500h5M2.500 1.500v12M2.500 6h3M2.500 12h3" stroke="#888" fill="none"/><rect x="4" y="4.500" width="3" height="3" fill="none" stroke="#e88a1c" stroke-width="1.300"/><rect x="4" y="10" width="3" height="3" fill="none" stroke="#e88a1c" stroke-width="1.300"/><path d="M9 14h3.500V6.500H15L11 1 7 6.500h2z" fill="#5b8cc5" stroke="#2f527c" stroke-width=".7"/></symbol>
<symbol id="l8" viewBox="0 0 16 16"><rect x="1.500" y="1.500" width="11.500" height="11" fill="#f0f0f0" stroke="#777"/><rect x="9" y="10" width="6.500" height="4.500" rx="1.500" fill="#e24b4b"/><path d="M10.300 12.200h4" stroke="#fff" stroke-width="1.200"/></symbol>
</svg>

<div class="window">
<nav class="menu">
<span>Pro<u>j</u>ect</span><span><u>E</u>dit</span><span><u>V</u>iew</span><span><u>L</u>ayer</span><span><u>S</u>ettings</span><span><u>P</u>lugins</span><span>Vect<u>o</u>r</span><span><u>R</u>aster</span><span><u>D</u>atabase</span><span><u>W</u>eb</span><span><u>M</u>esh</span><span>Pro<u>c</u>essing</span><span><u>H</u>elp</span>
</nav>
<div class="bar">
<i class="grip"></i><svg><use href="#new"/></svg><svg><use href="#open"/></svg><svg><use href="#save"/></svg><svg><use href="#newlay"/></svg><svg><use href="#laymgr"/></svg><svg><use href="#style"/></svg>
<i class="grip"></i><svg class="on"><use href="#pan"/></svg><svg><use href="#pansel"/></svg><svg><use href="#zin"/></svg><svg><use href="#zout"/></svg><svg><use href="#zfull"/></svg><svg><use href="#zsel"/></svg><svg><use href="#zlay"/></svg><svg><use href="#znat"/></svg><svg><use href="#zlast"/></svg><svg class="off"><use href="#znext"/></svg><svg><use href="#newmap"/></svg><svg><use href="#new3d"/></svg><svg><use href="#newbm"/></svg><svg><use href="#bm"/></svg><svg><use href="#clock"/></svg><svg><use href="#refresh"/></svg>
<i class="grip"></i><svg><use href="#ident"/></svg><svg class="off"><use href="#abacus"/></svg><svg class="on"><use href="#gear"/></svg><svg><use href="#sigma"/></svg><svg class="off"><use href="#table"/></svg><i class="dd dim"></i><svg><use href="#ruler"/></svg><i class="dd"></i><svg><use href="#tip"/></svg><svg class="off"><use href="#action"/></svg><i class="dd dim"></i>
</div>
<div class="bar">
<i class="grip"></i><svg><use href="#dsm"/></svg><svg><use href="#gpkg"/></svg><svg><use href="#vnew"/></svg><svg><use href="#fnew"/></svg><svg><use href="#chip"/></svg><svg><use href="#mnew"/></svg><i class="sep"></i><svg><use href="#vbnew"/></svg><i class="sep"></i>
<i class="grip"></i><svg class="off"><use href="#pens"/></svg><svg class="off"><use href="#pen"/></svg><svg class="off"><use href="#savee"/></svg><svg class="off"><use href="#addpoly"/></svg><svg class="off"><use href="#vtool"/></svg><i class="dd dim"></i><svg class="off"><use href="#multi"/></svg><svg class="off"><use href="#trash"/></svg><svg class="off"><use href="#sciss"/></svg><svg class="off"><use href="#copy"/></svg><svg class="off"><use href="#paste"/></svg><svg class="off"><use href="#undo"/></svg><svg class="off"><use href="#redo"/></svg>
<i class="grip"></i><svg class="off"><use href="#lab"/></svg><svg class="off"><use href="#diag"/></svg><i class="sep"></i><svg><use href="#pinlab"/></svg><svg><use href="#redlab"/></svg><i class="sep"></i><svg class="off"><use href="#lpin"/></svg><svg class="off"><use href="#leye"/></svg><svg class="off"><use href="#lmove"/></svg><svg class="off"><use href="#lrot"/></svg><svg class="off"><use href="#ledit"/></svg>
<i class="grip"></i><svg><use href="#gl1"/></svg><svg class="on"><use href="#gl2"/></svg><svg><use href="#gl3"/></svg>
<i class="grip"></i><svg><use href="#py"/></svg><svg><use href="#plug"/></svg><svg><use href="#rel"/></svg><i class="dd"></i><svg><use href="#hammer"/></svg>
</div>
<div class="bar">
<i class="grip"></i><svg class="off"><use href="#tri"/></svg><svg class="off"><use href="#arc"/></svg><i class="dd dim"></i><svg class="off"><use href="#d1"/></svg><i class="dd dim"></i><svg class="off"><use href="#d2"/></svg><svg class="off"><use href="#d3"/></svg><svg class="off"><use href="#d4"/></svg><svg class="off"><use href="#d5"/></svg><svg class="off"><use href="#d6"/></svg><svg class="off"><use href="#d7"/></svg><svg class="off"><use href="#d8"/></svg><svg class="off"><use href="#d9"/></svg><svg class="off"><use href="#d10"/></svg><svg class="off"><use href="#d11"/></svg><svg class="off"><use href="#d12"/></svg><svg class="off"><use href="#d13"/></svg><svg class="off"><use href="#d14"/></svg><svg class="off"><use href="#d14"/></svg><svg class="off"><use href="#d16"/></svg><svg class="off"><use href="#d17"/></svg><svg class="off"><use href="#d18"/></svg><i class="dd dim"></i>
<i class="grip"></i><svg><use href="#h1"/></svg><svg><use href="#h2"/></svg><svg><use href="#h3"/></svg><svg><use href="#h4"/></svg><svg><use href="#s1"/></svg><svg><use href="#s2"/></svg><svg><use href="#c1"/></svg><svg><use href="#c2"/></svg><svg><use href="#g1"/></svg><svg><use href="#g2"/></svg>
</div>
<div class="bar last">
<i class="grip"></i><svg class="off"><use href="#sel"/></svg><i class="dd dim"></i><svg class="off"><use href="#seps"/></svg><i class="dd dim"></i><svg><use href="#desel"/></svg><i class="dd"></i><svg><use href="#selloc"/></svg>
<i class="grip"></i><svg class="off"><use href="#m1"/></svg><svg class="off"><use href="#m2"/></svg><i class="dd dim"></i><svg class="off"><use href="#m3"/></svg><svg class="off"><use href="#m4"/></svg><i class="dd dim"></i>
<i class="grip"></i><svg><use href="#anno"/></svg><i class="dd"></i><svg><use href="#asel"/></svg><svg><use href="#apoly"/></svg><svg><use href="#aline"/></svg><svg><use href="#astar"/></svg><svg><use href="#atext"/></svg><i class="sep"></i><svg><use href="#aball"/></svg><i class="dd"></i>
<i class="grip"></i><svg><use href="#wms"/></svg>
</div>

<div class="work">
<aside class="side">
<i class="hgrip"></i>
<div><svg><use href="#vadd"/></svg></div><div><svg><use href="#radd"/></svg></div><div><svg><use href="#madd"/></svg></div><div><svg><use href="#comma"/></svg></div><div><svg><use href="#fadd"/></svg></div><div><svg><use href="#vbadd"/></svg></div><div><svg><use href="#pg"/></svg><i class="dd"></i></div><div><svg><use href="#wmsadd"/></svg></div><div><svg><use href="#wcs"/></svg></div><div><svg><use href="#wfs"/></svg></div><div><svg><use href="#vnew"/></svg><i class="dd"></i></div>
</aside>
<section class="panel">
<header><span>Layers</span>
<svg class="wb" viewBox="0 0 12 12"><rect x=".5" y=".5" width="11" height="11" rx="2.500" fill="#eee" stroke="#666"/><path d="M5 2.500h4.500V7H5zM2.500 5H7v4.500H2.500z" fill="#eee" stroke="#555" stroke-width=".8"/></svg><svg class="wb" viewBox="0 0 12 12"><rect x=".5" y=".5" width="11" height="11" rx="2.500" fill="#eee" stroke="#666"/><path d="M3 3l6 6M9 3L3 9" stroke="#333" stroke-width="1.800"/></svg></header>
<div class="ltools"><svg><use href="#l1"/></svg><svg><use href="#l2"/></svg><svg><use href="#l3"/></svg><svg><use href="#l4"/></svg><svg class="off"><use href="#l5"/></svg><i class="dd dim"></i><svg><use href="#l6"/></svg><svg><use href="#l7"/></svg><svg><use href="#l8"/></svg></div>
<div class="tree">
<div class="row"><i class="tw"></i><svg class="chk" viewBox="0 0 13 13"><rect width="13" height="13" fill="#fff"/><path d="M3 6.500l2.500 3.500L10 2.500" stroke="#000" stroke-width="2" fill="none"/></svg><svg class="ras" viewBox="0 0 13 13"><rect width="13" height="13" fill="#7fb0dc"/><path d="M0 0h3.200v3.200H0zM6.500 0h3.200v3.200H6.500zM3.200 3.200h3.300v3.300H3.200zM9.700 3.200H13v3.300H9.700zM0 6.500h3.200v3.200H0zM6.500 6.500h3.200v3.200H6.500zM3.200 9.700h3.300V13H3.200zM9.700 9.700H13V13H9.700z" fill="#24537f"/></svg><span>B1</span></div>
<div class="band">Band 1 (Gray)</div>
<div class="ramp"><i></i><p><span>22,141</span><span>0</span></p></div>
</div>
</section>
<div class="split"></div>
<main class="canvas">
<svg class="scene" viewBox="697 198 569 569">
<defs>
<clipPath id="foot"><path d="M823 199L1264.500 322.500 1141 766 698 642z"/></clipPath>
<filter id="haze" x="-10%" y="-10%" width="120%" height="120%" color-interpolation-filters="sRGB"><feGaussianBlur stdDeviation="8" result="b"/><feTurbulence type="fractalNoise" baseFrequency=".022 .016" numOctaves="6" seed="4" result="n"/><feDisplacementMap in="b" in2="n" scale="60" xChannelSelector="R" yChannelSelector="G"/></filter>
<filter id="streak" x="-10%" y="-10%" width="120%" height="120%" color-interpolation-filters="sRGB"><feGaussianBlur stdDeviation="4.500" result="b"/><feTurbulence type="fractalNoise" baseFrequency=".05" numOctaves="5" seed="9" result="n"/><feDisplacementMap in="b" in2="n" scale="20" xChannelSelector="R" yChannelSelector="G"/></filter>
<filter id="puff" x="-10%" y="-10%" width="120%" height="120%" color-interpolation-filters="sRGB"><feGaussianBlur stdDeviation="3" result="b"/><feTurbulence type="fractalNoise" baseFrequency=".09" numOctaves="5" seed="21" result="n"/><feDisplacementMap in="b" in2="n" scale="24" xChannelSelector="R" yChannelSelector="G" result="d"/><feColorMatrix in="n" values="0 0 0 0 1  0 0 0 0 1  0 0 0 0 1  2.400 0 0 0 -.6" result="m"/><feComposite in="d" in2="m" operator="arithmetic" k1=".8" k2=".3"/></filter>
<filter id="ridge" x="-10%" y="-10%" width="120%" height="120%" color-interpolation-filters="sRGB"><feGaussianBlur stdDeviation="1.800" result="b"/><feTurbulence type="fractalNoise" baseFrequency=".15" numOctaves="5" seed="33" result="n"/><feDisplacementMap in="b" in2="n" scale="18" xChannelSelector="R" yChannelSelector="G" result="d"/><feColorMatrix in="n" values="0 0 0 0 1  0 0 0 0 1  0 0 0 0 1  0 4 0 0 -1.700" result="m"/><feComposite in="d" in2="m" operator="arithmetic" k1=".7" k2=".25"/></filter>
<filter id="speck" x="-10%" y="-10%" width="120%" height="120%" color-interpolation-filters="sRGB"><feTurbulence type="fractalNoise" baseFrequency=".14" numOctaves="5" seed="8"/><feColorMatrix values="0 0 0 0 .7  0 0 0 0 .7  0 0 0 0 .7  0 5 0 0 -2.500" result="s"/><feGaussianBlur in="SourceAlpha" stdDeviation="14" result="a"/><feComposite in="s" in2="a" operator="in"/></filter>
<filter id="grain" x="-15%" y="-15%" width="130%" height="130%" color-interpolation-filters="sRGB"><feTurbulence type="fractalNoise" baseFrequency=".13 .1" numOctaves="5" seed="15"/><feColorMatrix values="2.200 0 0 0 -.55  2.200 0 0 0 -.55  2.200 0 0 0 -.55  0 0 0 0 1" result="g"/><feGaussianBlur in="SourceAlpha" stdDeviation="16" result="a"/><feComposite in="g" in2="a" operator="in"/></filter>
<filter id="veil" x="-15%" y="-15%" width="130%" height="130%" color-interpolation-filters="sRGB"><feTurbulence type="fractalNoise" baseFrequency=".034 .013" numOctaves="6" seed="5"/><feColorMatrix values="3 0 0 0 -.95  3 0 0 0 -.95  3 0 0 0 -.95  0 0 0 0 1" result="g"/><feGaussianBlur in="SourceAlpha" stdDeviation="18" result="a"/><feComposite in="g" in2="a" operator="in"/></filter>
</defs>
<rect x="697" y="198" width="569" height="569" fill="#000"/>
<g clip-path="url(#foot)">
<rect x="697" y="198" width="569" height="569" fill="#545454"/>
<g filter="url(#haze)">
<path d="M895 420L930 300 930 235 1075 270 1085 330 1085 480 1210 480 1250 440 1190 800 880 760 690 690 790 655 850 590 880 490z" fill="#707070"/>
<path d="M840 640L880 560 950 520 1100 520 1100 700 860 700z" fill="#757575"/>
<path d="M940 400L985 350 1040 430 1050 520 950 490z" fill="#8e8e8e"/>
<path d="M945 235L1085 270 1080 400 1015 330 960 300z" fill="#8c8c8c"/>
<path d="M890 545L1040 520 1050 620 890 630z" fill="#7c7c7c"/>
<path d="M1060 530L1210 490 1190 640 1160 780 1100 720 1060 640z" fill="#888"/>
<path d="M910 690L1050 700 1150 790 1000 770z" fill="#929292"/>
<path d="M985 650L1060 640 1055 690 990 690z" fill="#5c5c5c"/>
<path d="M830 205L890 230 880 265 845 265 820 250z" fill="#7f7f7f"/>
<path d="M800 230L835 260 820 290 790 290z" fill="#7c7c7c"/>
<path d="M960 335L990 345 985 375 960 370z" fill="#5c5c5c"/>
</g>
<path d="M860 240L1070 290 1070 480 1060 640 850 640 870 520 860 420z" filter="url(#grain)" class="grain"/>
<path d="M1060 500L1240 460 1150 790 850 720 850 620 1050 600z" filter="url(#veil)" class="veil"/>
<path d="M860 270L940 270 940 320 940 400 990 480 940 520 860 510 800 480 820 450 860 420z" filter="url(#speck)" opacity=".6"/>
<g filter="url(#streak)" fill="none" stroke-linecap="round">
<path d="M985 310L1015 350 1035 390 1054 440 1052 500" stroke="#686868" stroke-width="15"/>
<path d="M1005 345L1020 375 1032 405 1041 430" stroke="#c8c8c8" stroke-width="8"/>
<path d="M1040 440L1040 480 1044 520" stroke="#9c9c9c" stroke-width="9"/>
<path d="M1032 345L1045 370 1055 392" stroke="#d0d0d0" stroke-width="11"/>
<path d="M1062 425L1070 450 1072 475M1080 480l8 14" stroke="#b6b6b6" stroke-width="15"/>
<path d="M1030 265L1038 300 1062 310 1072 340" stroke="#a5a5a5" stroke-width="12"/>
<path d="M1172 490L1188 510 1196 540 1188 590" stroke="#bdbdbd" stroke-width="10"/>
<path d="M1120 505l-4 40M1155 510l8 50" stroke="#989898" stroke-width="13"/>
<path d="M1143 505l8 55M1085 525l-8 45M1212 515l-16 50M1085 645l-12 50" stroke="#626262" stroke-width="8"/>
<path d="M993 515L999 545M1115 670L1108 700M1002 700h8" stroke="#a8a8a8" stroke-width="8"/>
<path d="M1085 440L1150 452 1205 450M1100 475L1160 430" stroke="#545454" stroke-width="11"/>
</g>
<g filter="url(#puff)" fill="none" stroke-linecap="round" stroke-linejoin="round">
<path d="M840 215L862 235 885 258 900 262" stroke="#a4a4a4" stroke-width="28"/>
<path d="M863 233L885 248 902 255" stroke="#f4f4f4" stroke-width="9"/>
<path d="M818 240v35M900 240v25" stroke="#a0a0a0" stroke-width="18"/>
<path d="M935 245L960 262 980 272" stroke="#a8a8a8" stroke-width="26"/>
<path d="M962 240L985 252M962 258L980 272" stroke="#e8e8e8" stroke-width="6"/>
<path d="M800 308L820 320 840 328 846 350 850 370" stroke="#acacac" stroke-width="26"/>
<path d="M802 308L825 318 846 325M847 368l10 6" stroke="#e6e6e6" stroke-width="9"/>
<path d="M836 297h4M885 316l8 4" stroke="#dadada" stroke-width="12"/>
<path d="M912 306v26" stroke="#aaa" stroke-width="28"/>
<path d="M906 308h14M904 330h14" stroke="#d4d4d4" stroke-width="8"/>
<path d="M778 365l10 8M803 385L820 395 832 408" stroke="#e8e8e8" stroke-width="12"/>
<path d="M878 398L888 410 890 424" stroke="#d6d6d6" stroke-width="14"/>
<path d="M938 335L945 365 958 390" stroke="#a2a2a2" stroke-width="22"/>
<path d="M850 445v14M858 416h6" stroke="#e4e4e4" stroke-width="12"/>
<path d="M800 420l15 10M803 438l5 6M765 422h4M825 432h6" stroke="#9a9a9a" stroke-width="10"/>
<path d="M750 462l2 16M770 475l18 6M804 468l14 6" stroke="#aaa" stroke-width="9"/>
<path d="M738 518L750 530 764 550M738 565v10" stroke="#dadada" stroke-width="15"/>
<path d="M742 595h16M715 592v20M715 624l10 4M705 645L745 648 775 655" stroke="#b6b6b6" stroke-width="10"/>
<path d="M890 505L920 508 945 500M870 480h60M880 530l40 10" stroke="#8c8c8c" stroke-width="18"/>
<path d="M1198 465l4 22M1218 500l-8 20" stroke="#bbb" stroke-width="8"/>
</g>
<g filter="url(#ridge)" fill="none" stroke-linecap="round">
<path d="M1105 305L1120 320M1135 315v20M1105 330L1125 350 1140 358" stroke="#a6a6a6" stroke-width="26"/>
<path d="M1112 333h22M1128 305l12 12" stroke="#eee" stroke-width="6"/>
<path d="M1090 370h12M1112 378L1145 384M1085 385l20 12" stroke="#c4c4c4" stroke-width="16"/>
<path d="M1190 335L1175 362M1208 330L1198 365M1170 375L1190 380 1220 368M1228 335l10 10M1252 330L1235 360" stroke="#a8a8a8" stroke-width="13"/>
<path d="M1192 335L1180 360M1207 340L1198 360" stroke="#e0e0e0" stroke-width="5"/>
<path d="M1085 405L1110 425 1140 412M1110 420L1100 440M1165 418l10 8" stroke="#999" stroke-width="20"/>
<path d="M1075 455L1088 478M1110 475l22 6" stroke="#aaa" stroke-width="18"/>
<path d="M1195 410l15 4M1230 408l-6 8" stroke="#999" stroke-width="9"/>
</g>
</g>
</svg>
</main>
</div>
</div>
</body>
</html>
```
FILE: styles.css
```css
* { box-sizing: border-box; }
body { margin: 0; overflow: hidden; font: 14.67px "Noto Sans", sans-serif; color: #000; background: #efefef; }
.paints { position: absolute; width: 0; height: 0; }
.symbols { display: none; }
.window { width: 1285px; height: 782px; display: flex; flex-direction: column; border-top: 3px solid #393758; border-left: 2px solid #2f2a55; border-right: 1px solid #cfcde0; }
.menu { height: 24px; display: flex; padding-left: 10.5px; gap: 15.3px; line-height: 23px; letter-spacing: -.25px; background: linear-gradient(#c8c8c8, #ececec 4px, #efefef); border-bottom: 1px solid #d2d2d2; white-space: nowrap; }
.menu u { text-decoration: underline; text-underline-offset: 3px; text-decoration-thickness: 1px; text-decoration-skip-ink: none; }
.bar { height: 39px; display: flex; align-items: center; background: linear-gradient(#fafafa, #ebebeb); border-bottom: 1px solid #b4b4b4; overflow: hidden; }
.bar.last { height: 38px; }
.bar svg { width: 33px; height: 24px; flex: none; overflow: visible; }
.bar svg.on { height: 31px; padding: 2.5px 0; border: 1px solid #a9a9a9; border-radius: 3px; background: #dadada; width: 32px; margin-right: 1px; }
.off { opacity: .4; filter: saturate(.45); }
.grip { width: 16px; height: 17px; flex: none; background: radial-gradient(circle, #aaa 0.7px, transparent 1px) 0 0 / 3.5px 3.5px content-box; padding: 0 2px 0 7px; }
.grip:first-child { width: 12.5px; padding: 0 3.5px 0 4px; }
.sep { width: 7px; height: 19px; flex: none; background: linear-gradient(#c4c4c4, #c4c4c4) 3px 0 / 1px 100% no-repeat; }
.dd { width: 12px; height: 4px; flex: none; background: #555; clip-path: polygon(2.5px 0, 9.5px 0, 6px 4px); }
.dd.dim { background: #c8c8c8; }
.work { flex: 1; display: flex; min-height: 0; }
.side { width: 51px; padding-top: 1px; background: linear-gradient(90deg, #fafafa, #ebebeb); }
.side > div { height: 32px; display: flex; align-items: center; padding-left: 8px; }
.side svg { width: 24px; height: 24px; margin-right: 4px; overflow: visible; }
.hgrip { display: block; height: 12px; margin: 0 0 0 18px; width: 18px; padding: 5px 0 1px; background: radial-gradient(circle, #aaa 0.7px, transparent 1px) 0 0 / 3.5px 3.5px content-box; }
.panel { width: 221px; display: flex; flex-direction: column; border-left: 2px solid #b4b4b4; background: #efefef; }
.panel header { height: 24px; display: flex; align-items: center; gap: 2px; padding: 0 1px 1px 3px; }
.panel header span { flex: 1; letter-spacing: -.3px; }
.wb { width: 12px; height: 12px; }
.ltools { height: 29px; display: flex; align-items: center; padding: 0 0 3px 3px; }
.ltools svg { width: 25px; height: 16px; flex: none; }
.tree { flex: 1; background: #fff; border-top: 1px solid #b4b4b4; border-right: 1px solid #b4b4b4; }
.row { height: 21px; display: flex; align-items: center; background: #308cc6; border: 1px solid #2a7fb8; color: #fff; font-weight: bold; }
.row span { text-decoration: underline; text-underline-offset: 3px; font-size: 14.67px; line-height: 18px; letter-spacing: -.8px; margin: 0 0 1px 7px; color: #eaf6ff; }
.tw { width: 8px; height: 4px; margin: 0 8px 0 5px; background: #123f60; clip-path: polygon(0 0, 100% 0, 50% 100%); }
.chk { width: 13px; height: 13px; margin-left: 1px; }
.ras { width: 13px; height: 13px; margin-left: 9px; }
.band { height: 20px; line-height: 20px; padding-left: 43px; font-size: 14.67px; letter-spacing: -.45px; }
.ramp { display: flex; padding-left: 43px; }
.ramp i { width: 16px; height: 96px; background: linear-gradient(#fff, #000); }
.ramp p { margin: -1px 0 0 9px; display: flex; flex-direction: column; justify-content: space-between; height: 97px; line-height: 20px; letter-spacing: -.7px; }
.split { width: 6px; background: radial-gradient(circle, #bbb 0.7px, transparent 1px) 2px 404px / 3px 3px no-repeat, #efefef; }
.canvas { flex: 1; background: #fff; border: 1px solid #b4b4b4; border-right: 0; border-bottom-color: #a9a8b8; margin-top: 1px; padding: 14px 0 0 416px; }
.scene { display: block; width: 569px; height: 569px; }
.grain { mix-blend-mode: soft-light; opacity: .5; }
.veil { mix-blend-mode: soft-light; opacity: .6; }
.abc { font: bold 8px "Liberation Sans", sans-serif; text-anchor: middle; fill: #666; }
.abc.dk { fill: #222; font-size: 9px; }
.abc.red { fill: #f01010; }
.oo { font: bold 9px "Liberation Sans", sans-serif; text-anchor: middle; fill: #222; }
.ta { font: 13px "Noto Sans", sans-serif; text-anchor: middle; fill: #333; }
.inf { font: italic bold 14px "Liberation Serif", serif; text-anchor: middle; fill: #fff; }
.eps { font: 22px "Liberation Serif", serif; text-anchor: middle; fill: #444; }
.eps.sm { font-size: 16px; }
.bigA { font: bold 17px "Liberation Sans", sans-serif; text-anchor: middle; fill: #3f689a; stroke: #2a4a70; stroke-width: .6px; }
.tT { font: bold 15px "Liberation Serif", serif; text-anchor: middle; fill: #3b4448; }
```
